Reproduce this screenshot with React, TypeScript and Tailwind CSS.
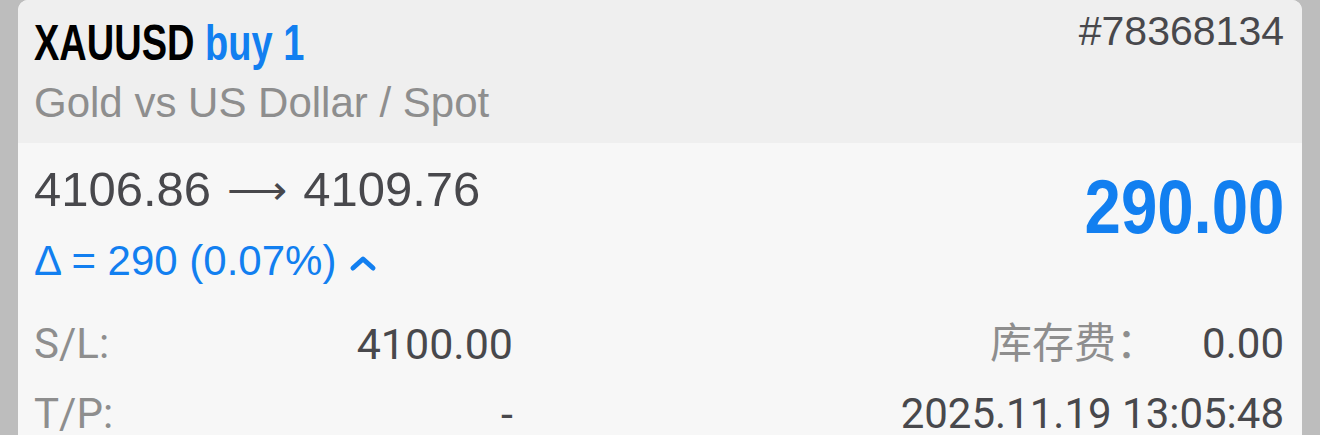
import { ReactNode } from "react";

const helv = "font-['Liberation_Sans','Helvetica',Arial,sans-serif]";
const android = "font-['Roboto','Noto_Sans_CJK_SC',sans-serif]";

function ChevronUp() {
  return (
    <svg width="30" height="20" viewBox="0 0 30 20" className="ml-3 mt-1">
      <polyline
        points="5,15 15,6 25,15"
        fill="none"
        stroke="#127ff0"
        strokeWidth="5"
        strokeLinecap="round"
        strokeLinejoin="round"
      />
    </svg>
  );
}

function Row({ label, value, right }: { label: ReactNode; value: string; right: ReactNode }) {
  return (
    <div className="flex leading-[42px]">
      <div className="flex w-[479px] justify-between">
        <span className="text-[#8e8e8e]">{label}</span>
        <span className="text-[43px] text-[#48484c]">{value}</span>
      </div>
      <div className="flex flex-1 justify-end">{right}</div>
    </div>
  );
}

export default function App() {
  return (
    <div className="h-[435px] w-full overflow-hidden bg-[#bdbdbd] px-[18px]">
      <div className="h-full overflow-hidden rounded-t-[10px] bg-[#f7f7f7]">
        {/* header */}
        <div className="flex h-[143px] justify-between bg-[#efefef] pl-4 pr-[18px]">
          <div>
            <div
              className={`${helv} mt-[18px] inline-block origin-left scale-x-[0.76] whitespace-nowrap text-[50px] font-bold leading-[50px]`}
            >
              <span className="text-black">XAUUSD</span>{" "}
              <span className="text-[#127ff0]">buy 1</span>
            </div>
            <div className={`${helv} mt-[14px] text-[42px] leading-[42px] text-[#8e8e8e]`}>
              Gold vs US Dollar / Spot
            </div>
          </div>
          <div className={`${helv} mt-[11px] text-[41px] leading-[41px] text-[#48484c]`}>#78368134</div>
        </div>

        {/* body */}
        <div className="pl-4 pr-[18px]">
          <div className="flex justify-between">
            <div>
              <div className={`${helv} mt-[22px] flex items-center text-[49px] leading-[49px] text-[#48484c]`}>
                <span>4106.86</span>
                <span className="mx-[16px] font-['DejaVu_Sans',sans-serif] text-[42px] font-light">⟶</span>
                <span>4109.76</span>
              </div>
              <div className={`${helv} mt-[27px] flex items-center text-[42px] leading-[39px] text-[#127ff0]`}>
                <span>Δ = 290 (0.07%)</span>
                <ChevronUp />
              </div>
            </div>
            <div
              className={`${helv} mt-[26px] origin-right scale-x-[0.86] text-[76px] font-bold leading-[76px] text-[#127ff0]`}
            >
              290.00
            </div>
          </div>

          <div className={`${android} mt-[43px] flex flex-col gap-[28px] text-[42px]`}>
            <Row
              label="S/L:"
              value="4100.00"
              right={
                <>
                  <span className="text-[#8e8e8e]">库存费：</span>
                  <span className="ml-[44px] text-[#48484c]">0.00</span>
                </>
              }
            />
            <Row
              label="T/P:"
              value="-"
              right={<span className="text-[#48484c]">2025.11.19 13:05:48</span>}
            />
          </div>
        </div>
      </div>
    </div>
  );
}
